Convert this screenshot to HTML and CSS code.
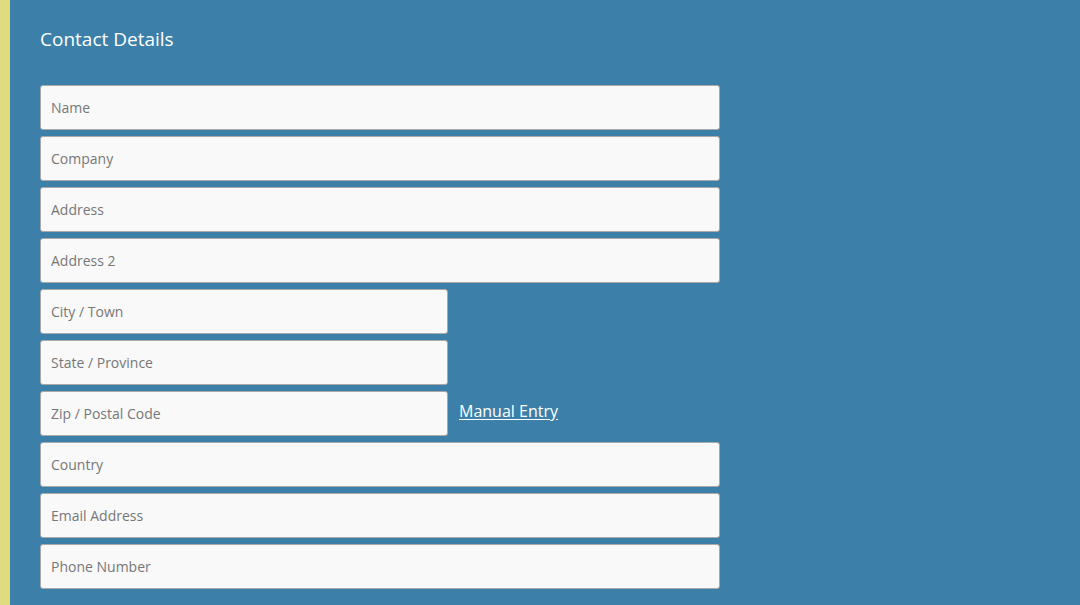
FILE: index.html
```html
<!DOCTYPE html>
<html>
<head>
<meta charset="utf-8">
<link rel="stylesheet" href="styles.css">
</head>
<body>
<div class="page">
  <div class="strip"></div>
  <div class="content">
    <h2 class="title">Contact Details</h2>
    <form class="form">
      <input class="field wide" type="text" placeholder="Name">
      <input class="field wide" type="text" placeholder="Company">
      <input class="field wide" type="text" placeholder="Address">
      <input class="field wide" type="text" placeholder="Address 2">
      <input class="field narrow" type="text" placeholder="City / Town">
      <input class="field narrow" type="text" placeholder="State / Province">
      <div class="row">
        <input class="field narrow" type="text" placeholder="Zip / Postal Code">
        <a class="manual" href="#">Manual Entry</a>
      </div>
      <input class="field wide" type="text" placeholder="Country">
      <input class="field wide" type="text" placeholder="Email Address">
      <input class="field wide" type="text" placeholder="Phone Number">
    </form>
  </div>
</div>
</body>
</html>
```
FILE: styles.css
```css
html, body {
  margin: 0;
  padding: 0;
  height: 100%;
  overflow: hidden;
}
body {
  font-family: "Open Sans", "Noto Sans", sans-serif;
  background: #3c7fa9;
}
.page {
  display: flex;
  min-height: 605px;
}
.strip {
  width: 10px;
  flex: 0 0 10px;
  background: #dfdc80;
}
.content {
  padding: 27px 0 0 30px;
  flex: 1;
}
.title {
  margin: 0 0 34px 0;
  font-size: 19px;
  line-height: 24px;
  font-weight: 400;
  color: #ffffff;
}
.form {
  display: flex;
  flex-direction: column;
  gap: 6px;
}
.row {
  display: flex;
  align-items: center;
}
.field {
  box-sizing: border-box;
  height: 45px;
  margin: 0;
  padding: 0 10px;
  border: 1px solid #a9a9a9;
  border-radius: 3px;
  background: #f9f9f9;
  font-family: "Open Sans", "Noto Sans", sans-serif;
  font-size: 14px;
  color: #333;
  outline: none;
}
.field::placeholder {
  color: #777777;
  opacity: 1;
}
.wide {
  width: 680px;
}
.narrow {
  width: 408px;
}
.manual {
  margin-left: 11px;
  margin-top: -6px;
  color: #ffffff;
  font-size: 16px;
  text-decoration: underline;
  text-underline-offset: 2px;
}
```
